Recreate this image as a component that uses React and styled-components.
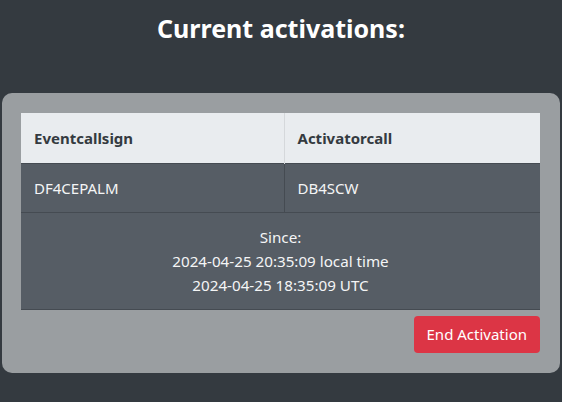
import styled, { createGlobalStyle } from "styled-components";

const GlobalStyle = createGlobalStyle`
    body {
        margin: 0;
        background: #343a40;
        font-family: "Noto Sans", "Open Sans", sans-serif;
        color: #fff;
    }
`;

const Page = styled.div`
    width: 562px;
    height: 402px;
    box-sizing: border-box;
    padding: 12px 2px 0 2px;
`;

const Title = styled.h2`
    margin: 0 0 49px 0;
    text-align: center;
    font-size: 25px;
    line-height: 32px;
    font-weight: 700;
    color: #fff;
`;

const Card = styled.div`
    background: #9a9ea1;
    border-radius: 10px;
    padding: 20px 20px 20px 19px;
`;

const Table = styled.table`
    width: 100%;
    border-collapse: collapse;
    font-size: 15px;
`;

const HeadCell = styled.th`
    background: #e9ecef;
    color: #343a40;
    text-align: left;
    font-weight: 700;
    height: 50px;
    padding: 0 13px;
    box-sizing: border-box;
    width: ${(p) => p.$w || "auto"};
    border-right: ${(p) => (p.$divider ? "1px solid #d5d8db" : "none")};
`;

const Cell = styled.td`
    background: #565d65;
    color: #f4f5f6;
    height: 49px;
    padding: 0 13px;
    box-sizing: border-box;
    border-top: 1px solid #454b52;
    border-right: ${(p) => (p.$divider ? "1px solid #454b52" : "none")};
`;

const SinceCell = styled.td`
    background: #565d65;
    color: #f4f5f6;
    text-align: center;
    font-size: 15.2px;
    padding: 12px 13px 12px;
    line-height: 24px;
    border-top: 1px solid #454b52;
    border-bottom: 1px solid #454b52;
`;

const Actions = styled.div`
    display: flex;
    justify-content: flex-end;
    margin-top: 6px;
`;

const DangerButton = styled.button`
    background: #dc3545;
    color: #fff;
    border: none;
    border-radius: 4px;
    height: 37px;
    padding: 0 13px;
    font-family: inherit;
    font-size: 15px;
`;

export default function App() {
    return (
        <>
            <GlobalStyle />
            <Page>
                <Title>Current activations:</Title>
                <Card>
                    <Table>
                        <thead>
                            <tr>
                                <HeadCell $w="263px" $divider>Eventcallsign</HeadCell>
                                <HeadCell>Activatorcall</HeadCell>
                            </tr>
                        </thead>
                        <tbody>
                            <tr>
                                <Cell $divider>DF4CEPALM</Cell>
                                <Cell>DB4SCW</Cell>
                            </tr>
                            <tr>
                                <SinceCell colSpan={2}>
                                    Since:
                                    <br />
                                    2024-04-25 20:35:09 local time
                                    <br />
                                    2024-04-25 18:35:09 UTC
                                </SinceCell>
                            </tr>
                        </tbody>
                    </Table>
                    <Actions>
                        <DangerButton>End Activation</DangerButton>
                    </Actions>
                </Card>
            </Page>
        </>
    );
}
